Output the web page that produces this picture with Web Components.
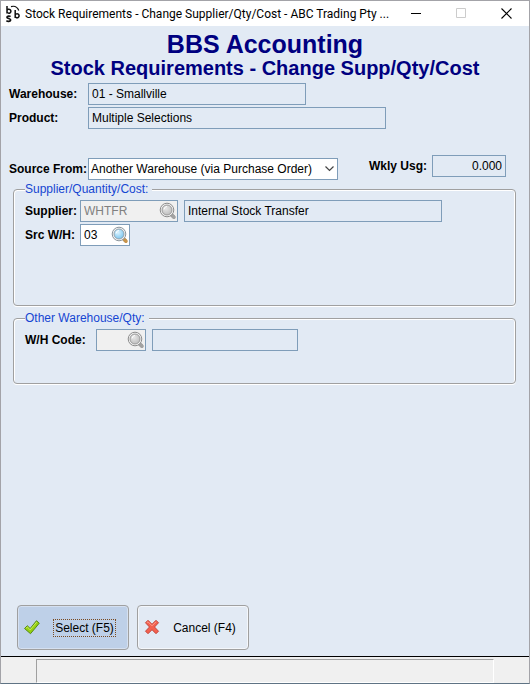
<!DOCTYPE html>
<html lang="en">
<head>
<meta charset="UTF-8">
<meta name="viewport" content="width=device-width, initial-scale=1">
<title>Stock Requirements - Change Supplier/Qty/Cost</title>
<style>
  :root {
    --panel: #e2eaf4;
    --field-border: #7f9db9;
    --etch: #a0a0a0;
    --navy: #000080;
    --legend: #1646d2;
  }
  body {
    margin: 0;
    font: 12px/14px "Liberation Sans", Arial, sans-serif;
    color: #000;
  }
  .fields {
    display: grid;
    gap: 2px;
    margin-top: 3px;
  }
  .source {
    display: flex;
    justify-content: space-between;
    align-items: flex-start;
    margin: 26px 15px 3px 0;
  }
  .source bbs-select {
    margin-top: 3px;
  }
  .row {
    display: flex;
    gap: 6px;
  }
  .row + .row {
    margin-top: 2px;
  }
  .groups {
    display: grid;
    gap: 6px;
    margin: 0 5px 0 4px;
  }
</style>
</head>
<body>

<bbs-window caption="Stock Requirements - Change Supplier/Qty/Cost - ABC Trading Pty ...">
  <bbs-heading company="BBS Accounting">Stock Requirements - Change Supp/Qty/Cost</bbs-heading>

  <div class="fields">
    <bbs-field label="Warehouse:" label-width="79" width="218" value="01 - Smallville"></bbs-field>
    <bbs-field label="Product:" label-width="79" width="298" value="Multiple Selections"></bbs-field>
  </div>

  <div class="source">
    <bbs-select label="Source From:" label-width="79" width="250" options="Another Warehouse (via Purchase Order)"></bbs-select>
    <bbs-field label="Wkly Usg:" label-width="63" width="74" value="0.000" numeric></bbs-field>
  </div>

  <div class="groups">
    <bbs-group heading="Supplier/Quantity/Cost:" style="--group-height: 123px">
      <div class="row">
        <bbs-lookup label="Supplier:" label-width="55" width="98" value="WHTFR" disabled></bbs-lookup>
        <bbs-field width="258" name="Supplier name" value="Internal Stock Transfer"></bbs-field>
      </div>
      <div class="row">
        <bbs-lookup label="Src W/H:" label-width="55" width="50" value="03"></bbs-lookup>
      </div>
    </bbs-group>
    <bbs-group heading="Other Warehouse/Qty:" style="--group-height: 72px">
      <div class="row">
        <bbs-lookup label="W/H Code:" label-width="71" width="50" value="" disabled></bbs-lookup>
        <bbs-field width="146" name="Warehouse name" value=""></bbs-field>
      </div>
    </bbs-group>
  </div>

  <bbs-button slot="actions" icon="tick" primary>Select (F5)</bbs-button>
  <bbs-button slot="actions" icon="cross">Cancel (F4)</bbs-button>
  <bbs-status slot="status"></bbs-status>
</bbs-window>

<script>
// rules shared by every labelled control
const CONTROL_STYLE = `
  :host { display: flex; align-items: flex-start; }
  label { flex: none; font-weight: bold; line-height: 22px; white-space: nowrap; }
  input, select {
    box-sizing: border-box;
    width: 100%;
    height: 22px;
    margin: 0;
    padding: 0 3px;
    border: 1px solid var(--field-border);
    border-radius: 0;
    background: var(--panel);
    color: #000;
    font: inherit;
    outline: none;
  }
`;

/**
 * bbs-window - dialog frame with title bar, action row and status bar
 * Slots: default, actions, status
 */
class BbsWindow extends HTMLElement {
  connectedCallback() {
    this.attachShadow({ mode: 'open' }).innerHTML = `
      <style>
        :host {
          display: flex;
          flex-direction: column;
          box-sizing: border-box;
          min-height: 100vh;
          border: 1px solid #a3a3a8;
          border-bottom-color: #5f7384;
          background: var(--panel);
        }
        header {
          display: flex;
          align-items: center;
          height: 25px;
          padding-left: 4px;
          background: #fff;
        }
        .logo { flex: none; width: 16px; height: 18px; }
        .caption {
          flex: 1;
          min-width: 0;
          margin-left: 4px;
          overflow: hidden;
          white-space: nowrap;
          font: 12px/18px "Segoe UI", Roboto, sans-serif;
        }
        header button {
          flex: none;
          display: grid;
          place-items: center;
          width: 45px;
          height: 25px;
          padding: 0;
          border: 0;
          background: none;
        }
        main {
          flex: 1;
          display: flex;
          flex-direction: column;
          padding: 6px 8px;
        }
        .actions {
          display: flex;
          gap: 8px;
          margin-top: auto;
          padding-left: 8px;
        }
      </style>
      <header>
        <svg class="logo" viewBox="0 0 16 18" fill="none" stroke="#111" stroke-width="1.5">
          <path d="M2 1v7.500M2 5.600a2 2 0 1 1 0 1.200M10.200 5v8M10.200 10.200a2 2 0 1 1 0 1.200"/>
          <path d="M5.500 11.600C4.600 10.800 2 10.900 2 12.300S5.600 13.300 5.600 15 2.600 16.600 1.400 15.600" stroke-width="1.800"/>
          <path d="M6 1.600C9.500.6 12.500 2.300 13.800 5.500" stroke-width="1.200"/>
        </svg>
        <span class="caption">${this.getAttribute('caption')}</span>
        <button aria-label="Minimize"><svg width="11" height="11"><path d="M0 5.500H10" stroke="#000"/></svg></button>
        <button aria-label="Maximize" disabled><svg width="11" height="11"><path d="M.5 .5h9v9h-9z" fill="none" stroke="#ccc"/></svg></button>
        <button aria-label="Close"><svg width="11" height="11"><path d="M.5 .5l10 10M10.500 .5l-10 10" stroke="#000" stroke-width="1.100"/></svg></button>
      </header>
      <main>
        <slot></slot>
        <div class="actions"><slot name="actions"></slot></div>
      </main>
      <slot name="status"></slot>
    `;
  }
}

class BbsHeading extends HTMLElement {
  connectedCallback() {
    this.attachShadow({ mode: 'open' }).innerHTML = `
      <style>
        :host { display: block; text-align: center; color: var(--navy); }
        h1, h2 { margin: 0; font-weight: bold; line-height: 24px; }
        h1 { font-size: 25px; }
        h2 { font-size: 20px; }
      </style>
      <h1>${this.getAttribute('company')}</h1>
      <h2><slot></slot></h2>
    `;
  }
}

/**
 * bbs-field - read-only display field
 * Attributes: label, label-width, width, value, name, numeric
 */
class BbsField extends HTMLElement {
  connectedCallback() {
    const label = this.getAttribute('label');
    const aria = label ? '' : `aria-label="${this.getAttribute('name')}"`;
    this.attachShadow({ mode: 'open' }).innerHTML = `
      <style>
        ${CONTROL_STYLE}
        label { width: ${this.getAttribute('label-width')}px; }
        .box { width: ${this.getAttribute('width')}px; }
        :host([numeric]) input { text-align: right; }
      </style>
      ${label ? `<label for="input">${label}</label>` : ''}
      <div class="box"><input id="input" ${aria} value="${this.getAttribute('value')}" readonly></div>
    `;
  }
}

/**
 * bbs-lookup - code entry with a search button at its right end
 */
class BbsLookup extends HTMLElement {
  connectedCallback() {
    const off = this.hasAttribute('disabled');
    const ring = off ? '#8c8c8c' : '#8a959d';
    const grip = off ? '#a2a2a2' : '#c8944a';
    this.attachShadow({ mode: 'open' }).innerHTML = `
      <style>
        ${CONTROL_STYLE}
        label { width: ${this.getAttribute('label-width')}px; }
        .box { display: grid; width: ${this.getAttribute('width')}px; }
        .box > * { grid-area: 1 / 1; }
        input { padding-right: 20px; background: #fff; }
        input:disabled { background: #f0f0f0; color: #808080; }
        button {
          justify-self: end;
          align-self: center;
          width: 18px;
          height: 18px;
          margin-right: 1px;
          padding: 0;
          border: 0;
          background: none;
        }
        svg { display: block; }
      </style>
      <label for="input">${this.getAttribute('label')}</label>
      <div class="box">
        <input id="input" value="${this.getAttribute('value')}" ${off ? 'disabled' : ''}>
        <button aria-label="Search" ${off ? 'disabled' : ''}>
          <svg width="18" height="18" viewBox="0 0 18 18">
            <defs>
              <radialGradient id="glass" cx=".4" cy=".35" r=".7">
                <stop offset="0" stop-color="${off ? '#e6e6e6' : '#dcf4ff'}"/>
                <stop offset="1" stop-color="${off ? '#bdbdbd' : '#76c3ee'}"/>
              </radialGradient>
            </defs>
            <path d="M12 12.500l2.500 2.300" stroke="${ring}" stroke-width="3.500" stroke-linecap="round"/>
            <path d="M13.600 13.800l1.400 1.400" stroke="${grip}" stroke-width="3.500" stroke-linecap="round"/>
            <circle cx="8" cy="8" r="6.800" fill="#f2f2f2" stroke="${ring}"/>
            <circle cx="8" cy="8" r="5" fill="url(#glass)" stroke="${ring}" stroke-width=".8"/>
            <path d="M5 7.500a3.200 3.200 0 0 1 3-3" fill="none" stroke="#fff"/>
          </svg>
        </button>
      </div>
    `;
  }
}

class BbsSelect extends HTMLElement {
  connectedCallback() {
    const options = this.getAttribute('options').split('|');
    this.attachShadow({ mode: 'open' }).innerHTML = `
      <style>
        ${CONTROL_STYLE}
        label { width: ${this.getAttribute('label-width')}px; }
        .box { display: grid; width: ${this.getAttribute('width')}px; }
        .box > * { grid-area: 1 / 1; }
        select { appearance: none; padding: 0 20px 0 2px; background: #fff; }
        svg { justify-self: end; align-self: center; margin-right: 4px; pointer-events: none; }
      </style>
      <label for="select">${this.getAttribute('label')}</label>
      <div class="box">
        <select id="select">${options.map(o => `<option>${o}</option>`).join('')}</select>
        <svg width="9" height="6"><path d="M.5 .5l4 4 4-4" fill="none" stroke="#444" stroke-width="1.200"/></svg>
      </div>
    `;
  }
}

// etched group box, grey line with a white highlight
class BbsGroup extends HTMLElement {
  connectedCallback() {
    this.attachShadow({ mode: 'open' }).innerHTML = `
      <style>
        :host { display: block; }
        fieldset {
          box-sizing: border-box;
          min-height: var(--group-height);
          margin: 0;
          padding: 4px 11px;
          border: 1px solid var(--etch);
          border-radius: 4px;
          box-shadow: inset 1px 1px #fff, inset -1px 0 #fff, 0 1px #fff;
        }
        legend {
          padding: 0 4px 0 0;
          background: var(--panel);
          color: var(--legend);
          line-height: 13px;
        }
      </style>
      <fieldset>
        <legend>${this.getAttribute('heading')}</legend>
        <slot></slot>
      </fieldset>
    `;
  }
}

const ICONS = {
  tick: `<path d="M1.500 9.500L4.300 6.700l2.900 2.800L13.500 1.700l2.800 2.500L7.500 14.700z" fill="#96d010" stroke="#568a1c" stroke-linejoin="round"/>
         <path d="M3 9.200l1.300-1.200 2.900 2.900 6.500-7.800" fill="none" stroke="#c6ee55"/>`,
  cross: `<path d="M2.500 3.800L5 1.300l4 4 4-4 2.500 2.500-4 4.200 4 4.200-2.500 2.500-4-4-4 4-2.500-2.500 4-4.200z" fill="#f4604e" stroke="#c2463c" stroke-linejoin="round"/>
          <path d="M3.800 3.800L5 2.800l4 4 4-4" fill="none" stroke="#ff9c8c"/>`
};

class BbsButton extends HTMLElement {
  connectedCallback() {
    this.attachShadow({ mode: 'open' }).innerHTML = `
      <style>
        :host { display: block; }
        button {
          display: flex;
          align-items: center;
          box-sizing: border-box;
          width: 112px;
          height: 45px;
          padding: 0 5px;
          border: 1px solid var(--etch);
          border-radius: 4px;
          box-shadow: inset 0 0 0 1px #f4f7fb;
          background: var(--panel);
          color: #000;
          font: inherit;
        }
        svg { flex: none; margin: 0 6px 2px 0; }
        span {
          margin: 0 auto;
          padding: 1px;
          border: 1px solid transparent;
          white-space: nowrap;
        }
        :host([primary]) button { background: #bed0e8; box-shadow: inset 0 0 0 1px #d5e0f0; }
        :host([primary]) span { border: 1px dotted #7a4a20; }
      </style>
      <button>
        <svg width="17" height="16" viewBox="0 0 17 16">${ICONS[this.getAttribute('icon')]}</svg>
        <span><slot></slot></span>
      </button>
    `;
  }
}

class BbsStatus extends HTMLElement {
  connectedCallback() {
    this.attachShadow({ mode: 'open' }).innerHTML = `
      <style>
        :host {
          display: block;
          padding: 2px 35px 0;
          border-top: 1px solid #000;
          background: #f0f0f0;
        }
        div {
          height: 22px;
          border: 1px solid #fff;
          border-top-color: var(--etch);
          border-left-color: var(--etch);
        }
      </style>
      <div role="status"></div>
    `;
  }
}

customElements.define('bbs-window', BbsWindow);
customElements.define('bbs-heading', BbsHeading);
customElements.define('bbs-field', BbsField);
customElements.define('bbs-lookup', BbsLookup);
customElements.define('bbs-select', BbsSelect);
customElements.define('bbs-group', BbsGroup);
customElements.define('bbs-button', BbsButton);
customElements.define('bbs-status', BbsStatus);
</script>
</body>
</html>
